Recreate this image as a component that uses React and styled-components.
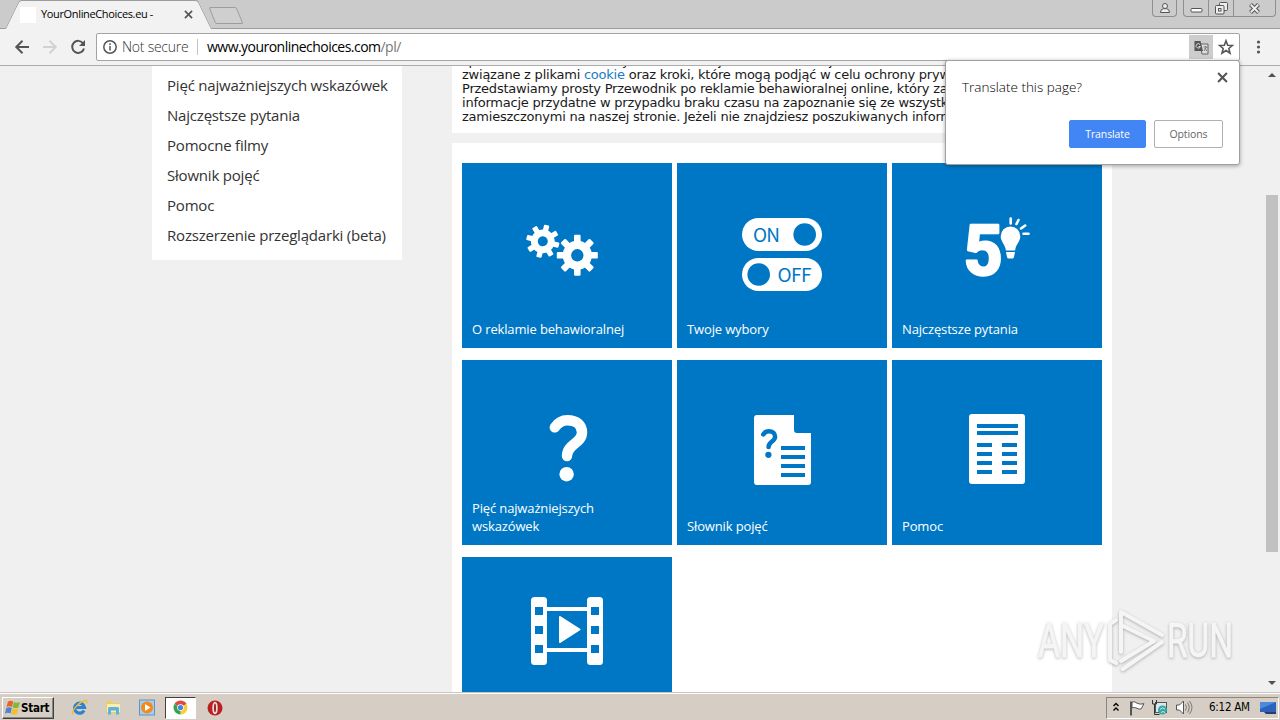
import React from "react";
import styled, { createGlobalStyle } from "styled-components";

const GlobalStyle = createGlobalStyle`
  * {
    box-sizing: border-box;
  }
  body {
    margin: 0;
    overflow: hidden;
  }
  svg {
    display: block;
    flex: none;
    overflow: visible;
  }
`;

const uiFont = `"Open Sans", "Noto Sans", sans-serif`;
const winFont = `"DejaVu Sans Condensed", "DejaVu Sans", sans-serif`;
const blue = "#0077c5";

const Screen = styled.div`
  position: relative;
  display: flex;
  flex-direction: column;
  width: 1280px;
  height: 720px;
  overflow: hidden;
  background: #f0f0f0;
  white-space: nowrap;
`;

/* ---------- browser frame ---------- */

const TabStrip = styled.div`
  display: flex;
  height: 29px;
  background: #cbcbcb;
  border-bottom: 1px solid #9c9c9c;
`;

const Tab = styled.div`
  position: relative;
  display: flex;
  align-items: center;
  width: 207px;
  height: 29px;
  margin-left: 5px;
  padding: 0 19px 0 15px;
  z-index: 1;

  &::before,
  &::after {
    content: "";
    position: absolute;
    top: 0;
    bottom: 0;
    width: 55%;
    background: #f2f2f2;
    border-top: 1px solid #9c9c9c;
    z-index: -1;
  }
  &::before {
    left: 0;
    border-left: 1px solid #9c9c9c;
    border-top-left-radius: 3px;
    transform: skewX(-26deg);
    transform-origin: bottom left;
  }
  &::after {
    right: 0;
    border-right: 1px solid #9c9c9c;
    border-top-right-radius: 3px;
    transform: skewX(26deg);
    transform-origin: bottom right;
  }
`;

const Favicon = styled.div`
  width: 16px;
  height: 16px;
  background: #fff;
`;

const TabTitle = styled.div`
  flex: 1;
  margin-left: 5px;
  margin-top: -1px;
  font: 400 11px/20px ${uiFont};
  letter-spacing: -0.35px;
  color: #000;
`;

const NewTab = styled.div`
  width: 28px;
  height: 17px;
  margin: 7px 0 0;
  border: 1px solid #9d9d9d;
  border-radius: 2px;
  background: #cfcfcf;
  transform: skewX(22deg);
`;

const WindowButtons = styled.div`
  display: flex;
  margin-left: auto;
  margin-right: 4px;
  height: 17px;
`;

const WindowButton = styled.div`
  display: flex;
  align-items: center;
  justify-content: center;
  width: ${props => props.$width}px;
  margin-left: ${props => props.$gap || 0}px;
  border: 1px solid #8f8f8f;
  border-top: none;
  border-right-width: ${props => (props.$joined ? 0 : 1)}px;
  border-radius: ${props => props.$radius || "0"};
`;

const Toolbar = styled.div`
  display: flex;
  align-items: center;
  height: 37px;
  padding-left: 14px;
  background: #f2f2f2;
  border-bottom: 1px solid #acacac;
`;

const NavIcons = styled.div`
  display: flex;
  gap: 12px;
  width: 82px;
`;

const AddressBar = styled.div`
  display: flex;
  align-items: center;
  width: 1144px;
  height: 28px;
  padding: 0 5px;
  background: #fff;
  border: 1px solid #a3a3a3;
  border-radius: 2px;
  font: 400 14px/24px ${uiFont};
`;

const NotSecure = styled.div`
  width: 76px;
  margin-left: 4px;
  border-right: 1px solid #c4c4c4;
  font-weight: 300;
  line-height: 16px;
  letter-spacing: -0.25px;
  color: #333;
`;

const Url = styled.div`
  flex: 1;
  margin-left: 9px;
  letter-spacing: -0.53px;
  color: #000;

  span {
    color: #777;
  }
`;

const TranslateChip = styled.div`
  display: flex;
  align-items: center;
  justify-content: center;
  width: 24px;
  height: 24px;
  margin-right: 5px;
  background: #cdcdcd;
`;

/* ---------- web page ---------- */

const Viewport = styled.div`
  display: flex;
  align-items: flex-start;
  height: 626px;
  overflow: hidden;
`;

const Sidebar = styled.div`
  width: 250px;
  height: 194px;
  margin-left: 152px;
  padding: 4px 15px;
  background: #fff;
`;

const SidebarLink = styled.div`
  font: 400 15px/30px ${uiFont};
  letter-spacing: -0.2px;
  color: #333;
`;

const Main = styled.div`
  display: flex;
  flex-direction: column;
  gap: 10px;
  width: 660px;
  height: 626px;
  margin-left: 50px;
`;

const Intro = styled.div`
  display: flex;
  flex-direction: column;
  justify-content: flex-end;
  flex: none;
  height: 67px;
  padding: 0 10px 9px;
  overflow: hidden;
  background: #fff;
  font: 400 13px/14px "DejaVu Sans", sans-serif;
  color: #1a1a1a;

  div {
    flex: none;
    letter-spacing: -0.23px;
  }
  span {
    color: #1a7cc4;
  }
`;

const Tiles = styled.div`
  display: grid;
  flex: 1;
  grid-template-columns: repeat(3, 210px);
  grid-auto-rows: 185px;
  gap: 12px 5px;
  padding: 20px 10px 0;
  background: #fff;
`;

const Tile = styled.div`
  display: flex;
  flex-direction: column;
  align-items: center;
  justify-content: space-between;
  padding: 35px 10px 10px;
  background: ${blue};
`;

const TileLabel = styled.div`
  width: 100%;
  height: 18px;
  display: flex;
  flex-direction: column;
  justify-content: flex-end;
  font: 400 13px/18px ${uiFont};
  letter-spacing: -0.14px;
  white-space: pre;
  color: #fff;
`;

const ScrollBar = styled.div`
  display: flex;
  flex-direction: column;
  align-items: center;
  width: 14px;
  height: 626px;
  margin-left: auto;
  margin-right: 1px;
`;

const Thumb = styled.div`
  width: 12px;
  height: 357px;
  margin: 118px 0 auto;
  background: #c1c1c1;
`;

const Arrow = styled.div`
  width: 0;
  border: 4px solid transparent;
  border-width: ${props => (props.$down ? "4px 4px 0" : "0 4px 4px")};
  border-${props => (props.$down ? "top" : "bottom")}-color: #505050;
  margin: ${props => (props.$down ? "0 0 7px" : "7px 0 0")};
`;

/* ---------- translate bubble ---------- */

const Bubble = styled.div`
  position: absolute;
  left: 945px;
  top: 60px;
  display: flex;
  flex-direction: column;
  justify-content: space-between;
  width: 295px;
  height: 105px;
  padding: 11px 16px 16px;
  background: #fff;
  border: 1px solid #a0a0a0;
  border-radius: 3px;
  box-shadow: 0 1px 4px rgba(0, 0, 0, 0.35);
  z-index: 5;
`;

const BubbleTop = styled.div`
  display: flex;
  justify-content: space-between;
  margin-right: -5px;
`;

const BubbleTitle = styled.div`
  margin-top: 5px;
  font: 300 13.5px/20px ${uiFont};
  color: #000;
`;

const BubbleButtons = styled.div`
  display: flex;
  justify-content: flex-end;
  gap: 8px;
`;

const BubbleButton = styled.div`
  width: ${props => props.$width}px;
  height: 28px;
  border: 1px solid ${props => (props.$primary ? "#4285f4" : "#b0b0b0")};
  border-radius: 2px;
  background: ${props => (props.$primary ? "#4285f4" : "#fff")};
  color: ${props => (props.$primary ? "#fff" : "#666")};
  font: 400 10.5px/26px ${uiFont};
  letter-spacing: -0.1px;
  text-align: center;
`;

/* ---------- watermark ---------- */

const Watermark = styled.div`
  position: absolute;
  left: 1030px;
  top: 600px;
  filter: drop-shadow(0 1px 1.5px rgba(0, 0, 0, 0.28));
`;

/* ---------- taskbar ---------- */

const Taskbar = styled.div`
  display: flex;
  align-items: center;
  height: 28px;
  padding: 2px 0 0 2px;
  background: #d6cec4;
  border-top: 1px solid #c9c5be;
  box-shadow: inset 0 1px 0 #fff;
  font: 400 11.5px/20px ${winFont};
`;

const StartButton = styled.div`
  display: flex;
  align-items: center;
  gap: 1px;
  width: 52px;
  height: 22px;
  padding-left: 2px;
  border: 1px solid;
  border-color: #fff #404040 #404040 #fff;
  box-shadow: inset -1px -1px 0 #8c8680;
  font-weight: bold;
  font-size: 11.5px;
  letter-spacing: -0.25px;
  color: #000;
`;

const QuickLaunch = styled.div`
  display: flex;
  align-items: center;
  margin-left: 9px;
`;

const TaskIcon = styled.div`
  display: flex;
  align-items: center;
  justify-content: center;
  width: ${props => props.$width || 33.5}px;
  height: 22px;
`;

const ActiveTaskIcon = styled(TaskIcon)`
  width: 31px;
  margin-left: 1px;
  background: #fff;
  border: 1px solid;
  border-color: #404040 #fff #fff #404040;
`;

const Tray = styled.div`
  display: flex;
  align-items: center;
  width: 173px;
  height: 22px;
  margin-left: auto;
  margin-right: 1px;
  padding-left: 5px;
  border: 1px solid;
  border-color: #8c8680 #fff #fff #8c8680;
`;

const Clock = styled.div`
  width: 51px;
  margin-left: 16px;
  margin-top: -1px;
  letter-spacing: -0.25px;
  color: #000;
`;

const Close = ({ size, stroke = 2 }) => (
  <svg width={size} height={size} viewBox="0 0 10 10">
    <path d="M1 1l8 8M9 1l-8 8" stroke="#555" strokeWidth={stroke} />
  </svg>
);

const Gear = ({ x, y, scale = 1, turn = 0 }) => (
  <g transform={`translate(${x} ${y}) scale(${scale}) rotate(${turn})`}>
    <circle r="10.4" fill="none" stroke="#fff" strokeWidth="8.4" />
    {[0, 45, 90, 135, 180, 225, 270, 315].map(a => (
      <rect
        key={a}
        x="-3.3"
        y="-20.5"
        width="6.6"
        height="9"
        rx="1.2"
        fill="#fff"
        transform={`rotate(${a})`}
      />
    ))}
  </g>
);

const Question = ({ color }) => (
  <g>
    <path
      d="M32.8 22.4C36 17.5 40 15.2 45.5 15.2C54.5 15.2 60 20 60 27.5C60 38.5 45 39 45 51"
      fill="none"
      stroke={color}
      strokeWidth="10.4"
      strokeLinecap="round"
    />
    <circle cx="44.6" cy="69.2" r="7.2" fill={color} />
  </g>
);

const GearsIcon = () => (
  <g>
    <Gear x={20.8} y={33.3} scale={0.81} turn={14} />
    <Gear x={55.3} y={47.3} />
  </g>
);

const SwitchesIcon = () => (
  <g fill={blue} fontFamily="Noto Sans CJK SC, sans-serif" fontSize="19">
    <rect x="5" y="10" width="80" height="33" rx="16.5" fill="#fff" />
    <rect x="5" y="50" width="80" height="33" rx="16.5" fill="#fff" />
    <circle cx="67.7" cy="26.5" r="11.3" />
    <circle cx="21.7" cy="66.5" r="11.3" />
    <text x="16" y="33.5" textLength="27">ON</text>
    <text x="40.5" y="73.5" textLength="34">OFF</text>
  </g>
);

const FiveIcon = () => (
  <g fill="#fff">
    <text
      x="11.5"
      y="67"
      fontFamily="Roboto, sans-serif"
      fontWeight="700"
      fontSize="70"
      textLength="39"
      lengthAdjust="spacingAndGlyphs"
      stroke="#fff"
      strokeWidth="2.6"
      strokeLinejoin="round"
    >
      5
    </text>
    <path d="M58.5 18.5a9.8 9.8 0 0 1 9.8 9.8c0 5.6-4.6 8-5.2 14.2h-9.2c-.6-6.2-5.2-8.6-5.2-14.2a9.8 9.8 0 0 1 9.8-9.8z" stroke={blue} strokeWidth="1" paintOrder="stroke" />
    <path d="M54 44h9l-1 5q-.3 1.5-1.8 1.5h-3.4q-1.5 0-1.8-1.5z" />
    <path
      d="M58.7 10.500v5M64.500 16l2-4M69 20.500l4.200-3M71.500 25.700h5"
      stroke="#fff"
      strokeWidth="2.6"
      strokeLinecap="round"
    />
  </g>
);

const GlossaryIcon = () => (
  <g>
    <path
      d="M20 10h37v15q0 3 3 3h14v49q0 3-3 3H20q-3 0-3-3V13q0-3 3-3z"
      fill="#fff"
    />
    <g transform="translate(12 19.7) scale(.435)">
      <Question color={blue} />
    </g>
    {[41, 50, 59, 68].map(y => (
      <rect key={y} x="44" y={y} width="24" height="4" fill={blue} />
    ))}
  </g>
);

const HelpIcon = () => (
  <g fill={blue}>
    <rect x="17" y="9" width="56" height="70" rx="3" fill="#fff" />
    <rect x="25" y="19" width="41" height="4" />
    <rect x="25" y="26" width="41" height="4" />
    {[38, 47, 56, 65].map(y => (
      <path key={y} d={`M25 ${y}h15v4h-15zM50 ${y}h15v4h-15z`} />
    ))}
  </g>
);

const FilmIcon = () => (
  <g fill="#fff">
    <rect x="9" y="-5" width="16" height="68" rx="3.5" />
    <rect x="65" y="-5" width="16" height="68" rx="3.5" />
    <rect x="25" y="5" width="40" height="4" />
    <rect x="25" y="46" width="40" height="4" />
    <path
      d="M38 15l19.5 12.5l-19.5 12.5z"
      stroke="#fff"
      strokeWidth="2"
      strokeLinejoin="round"
    />
    {[5, 24, 43].map(y => (
      <path key={y} d={`M13 ${y}h8v8h-8zM69 ${y}h8v8h-8z`} fill={blue} />
    ))}
  </g>
);

const tiles = [
  { label: "O reklamie behawioralnej", Drawing: GearsIcon },
  { label: "Twoje wybory", Drawing: SwitchesIcon },
  { label: "Najczęstsze pytania", Drawing: FiveIcon },
  { label: "Pięć najważniejszych\nwskazówek", Drawing: () => <Question color="#fff" /> },
  { label: "Słownik pojęć", Drawing: GlossaryIcon },
  { label: "Pomoc", Drawing: HelpIcon },
  { label: "", Drawing: FilmIcon }
];

const links = [
  "Pięć najważniejszych wskazówek",
  "Najczęstsze pytania",
  "Pomocne filmy",
  "Słownik pojęć",
  "Pomoc",
  "Rozszerzenie przeglądarki (beta)"
];

const BrowserTop = () => (
  <>
    <TabStrip>
      <Tab>
        <Favicon />
        <TabTitle>YourOnlineChoices.eu -</TabTitle>
        <Close size={9} stroke={1.8} />
      </Tab>
      <NewTab />
      <WindowButtons>
        <WindowButton $width={25} $radius="0 0 4px 4px">
          <svg width="12" height="12" viewBox="0 0 12 12" fill="#eee" stroke="#555">
            <path d="M1.5 10.5q0-3.5 3-3.8h3q3 .3 3 3.8z" />
            <circle cx="6" cy="4" r="2.5" />
          </svg>
        </WindowButton>
        <WindowButton $width={25} $gap={6} $joined $radius="0 0 0 4px">
          <svg width="13" height="12" viewBox="0 0 13 12" fill="#fff" stroke="#555">
            <rect x="1" y="6.5" width="11" height="3.5" rx="1" />
          </svg>
        </WindowButton>
        <WindowButton $width={25} $joined>
          <svg width="13" height="13" viewBox="0 0 13 13" fill="#eee" stroke="#555">
            <rect x="4.5" y=".5" width="8" height="8" rx="1" />
            <rect x=".5" y="3.5" width="8.5" height="8.5" rx="1" />
            <rect x="3.5" y="6.5" width="2.5" height="2.5" />
          </svg>
        </WindowButton>
        <WindowButton $width={43} $radius="0 0 4px 0">
          <svg width="13" height="11" viewBox="0 0 13 11">
            <path d="M2.5 1.5l8 8M10.5 1.5l-8 8" stroke="#555" strokeWidth="4" />
            <path d="M2.8 1.8l7.4 7.4M10.2 1.8l-7.4 7.4" stroke="#eee" strokeWidth="2" />
          </svg>
        </WindowButton>
      </WindowButtons>
    </TabStrip>
    <Toolbar>
      <NavIcons>
        <svg width="16" height="16" viewBox="0 0 16 16" fill="none" stroke="#555" strokeWidth="2">
          <path d="M15 8H2.5M8.5 1.8L2.3 8l6.2 6.2" />
        </svg>
        <svg width="16" height="16" viewBox="0 0 16 16" fill="none" stroke="#d2d2d2" strokeWidth="2">
          <path d="M1 8h12.5M7.5 1.8L13.7 8l-6.2 6.2" />
        </svg>
        <svg width="16" height="16" viewBox="0 0 16 16" fill="none" stroke="#555" strokeWidth="2">
          <path d="M13.2 4.5A6 6 0 1 0 14 9.5" />
          <path d="M15 1v6H9z" fill="#555" stroke="none" />
        </svg>
      </NavIcons>
      <AddressBar>
        <svg width="16" height="16" viewBox="0 0 16 16" fill="none" stroke="#555" strokeWidth="1.5">
          <circle cx="8" cy="8" r="6.2" />
          <path d="M8 7v4.5M8 4.2v1.7" />
        </svg>
        <NotSecure>Not secure</NotSecure>
        <Url>
          www.youronlinechoices.com<span>/pl/</span>
        </Url>
        <TranslateChip>
          <svg width="15" height="15" viewBox="0 0 15 15">
            <path d="M6 4h8v10H8z" fill="#ddd" stroke="#666" />
            <path d="M9.5 7h4M11.5 6v1M10 11l2.7-4M10.5 8l2.5 3" stroke="#777" fill="none" />
            <path d="M.5 1h6l2.5 10H.5z" fill="#555" />
            <path d="M6 4.5a2.2 2.2 0 1 0 .4 2H4.6" stroke="#ddd" fill="none" />
          </svg>
        </TranslateChip>
        <svg width="16" height="16" viewBox="0 0 16 16" fill="none" stroke="#555" strokeWidth="1.6">
          <path d="M8 1.8l1.7 4.4 4.7.3-3.6 3 1.2 4.6L8 11.5l-4 2.6 1.2-4.6-3.6-3 4.7-.3z" />
        </svg>
      </AddressBar>
      <svg width="37" height="16" viewBox="0 0 37 16" fill="#555">
        <circle cx="18.5" cy="3" r="1.6" />
        <circle cx="18.5" cy="8" r="1.6" />
        <circle cx="18.5" cy="13" r="1.6" />
      </svg>
    </Toolbar>
  </>
);

const TranslateBubble = () => (
  <Bubble>
    <BubbleTop>
      <BubbleTitle>Translate this page?</BubbleTitle>
      <Close size={11} stroke={1.9} />
    </BubbleTop>
    <BubbleButtons>
      <BubbleButton $primary $width={77}>Translate</BubbleButton>
      <BubbleButton $width={69}>Options</BubbleButton>
    </BubbleButtons>
  </Bubble>
);

const AnyRun = () => (
  <Watermark>
    <svg width="215" height="80" viewBox="0 0 215 80">
      <g
        fill="#f5f5f5"
        stroke="#f5f5f5"
        strokeWidth="0.8"
        fontFamily="Roboto, sans-serif"
        fontSize="48"
      >
        <text x="8" y="57" textLength="66" lengthAdjust="spacingAndGlyphs">ANY</text>
        <text x="137" y="57" textLength="66" lengthAdjust="spacingAndGlyphs">RUN</text>
      </g>
      <g fill="none" stroke="#f5f5f5" strokeWidth="4" strokeLinejoin="round" strokeLinecap="round">
        <path d="M91 52V12l41 23" />
        <path d="M132 42L93 69" />
        <path d="M91 25l33 16-33 20" />
        <path d="M86 20l-6 4v36l6 3" />
      </g>
    </svg>
  </Watermark>
);

const WindowsTaskbar = () => (
  <Taskbar>
    <StartButton>
      <svg width="15" height="16" viewBox="0 0 15 16">
        <path d="M3 1.5q2.5-1.500 5.200 0L7 7q-2.800-1.400-5.500 0z" fill="#e8622c" />
        <path d="M8.900 2q2.800 1.300 6 0L13.500 7.500q-2.900 1.200-5.800 0z" fill="#7fb93c" />
        <path d="M1.300 8q2.700-1.400 5.500 0L5.500 13.500q-2.700-1.400-5.500 0z" fill="#4a86cf" />
        <path d="M7.500 8.500q2.900 1.300 5.800 0L12 14q-2.900 1.300-5.800 0z" fill="#f5bd2a" />
      </svg>
      Start
    </StartButton>
    <QuickLaunch>
      <TaskIcon>
        <svg width="17" height="17" viewBox="0 0 17 17" fill="none">
          <path d="M13 11.500A5 5 0 1 1 13.500 8.500H4.500" stroke="#2c83cf" strokeWidth="3.200" />
          <path d="M2 15.500C-1 13 8 3 14 1.500q3-.2 1.500 3" stroke="#f0bc35" strokeWidth="1.400" />
        </svg>
      </TaskIcon>
      <TaskIcon>
        <svg width="17" height="17" viewBox="0 0 17 17">
          <path d="M1 2h6l1 2h7v10H1z" fill="#e8cf6a" />
          <path d="M2 5h13v8H2z" fill="#f8eeb0" />
          <path d="M3 15.500V9.500q0-1.500 1.500-1.500h8q1.500 0 1.500 1.500v6h-3V11.500H6v4z" fill="#5fb2dc" />
        </svg>
      </TaskIcon>
      <TaskIcon>
        <svg width="16" height="17" viewBox="0 0 16 17">
          <rect x=".5" y="1" width="15" height="15" fill="#a9cdee" stroke="#5b94cc" />
          <circle cx="8" cy="8.5" r="6" fill="#f28a1c" />
          <path d="M6 5l5.500 3.500L6 12z" fill="#fff" />
        </svg>
      </TaskIcon>
      <ActiveTaskIcon>
        <svg width="15" height="15" viewBox="0 0 15 15">
          <path d="M7.500 7.500L1.440 4A7 7 0 0 1 13.560 4z" fill="#dd4b3e" />
          <path d="M7.500 7.500L13.560 4A7 7 0 0 1 7.500 14.500z" fill="#f8ce3c" />
          <path d="M7.500 7.500V14.500A7 7 0 0 1 1.440 4z" fill="#32a350" />
          <circle cx="7.5" cy="7.5" r="3.3" fill="#fff" />
          <circle cx="7.5" cy="7.5" r="2.6" fill="#4384e8" />
        </svg>
      </ActiveTaskIcon>
      <TaskIcon $width={38}>
        <svg width="16" height="16" viewBox="0 0 16 16">
          <circle cx="8" cy="8" r="7.5" fill="#bb1f1f" />
          <ellipse cx="8" cy="8" rx="1.8" ry="5.3" fill="#8a0f0f" stroke="#f2dede" strokeWidth="1.8" />
        </svg>
      </TaskIcon>
    </QuickLaunch>
    <Tray>
      <svg width="8" height="12" viewBox="0 0 8 12" fill="none" stroke="#000" strokeWidth="1.4">
        <path d="M1.5 4L4 1.500 6.500 4M1.500 8.500L4 6l2.500 2.500" />
      </svg>
      <svg width="31" height="18" viewBox="0 0 31 18" fill="#fff" stroke="#555">
        <path d="M11 2.500v14" stroke="#555" strokeWidth="2" />
        <path d="M12 3q3-1 5 1.200 3 1.600 7 .5l-3 5.300q-2 .5-4-.7-2-1.300-5-.5z" />
      </svg>
      <svg width="17" height="17" viewBox="0 0 17 17">
        <rect x="4.5" y="3.5" width="11" height="10" fill="#d5e8ee" stroke="#555" />
        <circle cx="11.5" cy="11" r="4.5" fill="#3ba4a4" />
        <path d="M9 10.500q2.500-3 5-.5M10 13.500q2-2 4 0" stroke="#c6efe0" fill="none" />
        <path d="M1.500 1v4h4V1M3.500 5v10.500h5" stroke="#333" fill="none" />
      </svg>
      <svg width="25" height="17" viewBox="0 0 25 17" fill="none" stroke="#777">
        <path d="M8.500 6h3l4-4v13l-4-4h-3z" fill="#fff" stroke="#555" />
        <path d="M17.500 5.500q2 3 0 6M19.500 3.500q3.500 5 0 10M21.500 2q5 6.500 0 13" />
      </svg>
      <Clock>6:12 AM</Clock>
      <svg width="16" height="14" viewBox="0 0 16 14">
        <path d="M0 1h16v10H0z" fill="#2a62bd" />
        <path d="M0 1h16L0 8z" fill="#4c8add" />
        <path d="M4 11h12v2H6z" fill="#263f66" />
      </svg>
    </Tray>
  </Taskbar>
);

const App = () => (
  <Screen>
    <GlobalStyle />
    <BrowserTop />
    <Viewport>
      <Sidebar>
        {links.map(link => (
          <SidebarLink key={link}>{link}</SidebarLink>
        ))}
      </Sidebar>
      <Main>
        <Intro>
          <div>sposobu działania reklamy behawioralnej, dalsze informacje</div>
          <div>
            związane z plikami <span>cookie</span> oraz kroki, które mogą podjąć w celu ochrony prywatności.
          </div>
          <div>Przedstawiamy prosty Przewodnik po reklamie behawioralnej online, który zawiera</div>
          <div>informacje przydatne w przypadku braku czasu na zapoznanie się ze wszystkimi</div>
          <div>zamieszczonymi na naszej stronie. Jeżeli nie znajdziesz poszukiwanych informacji</div>
        </Intro>
        <Tiles>
          {tiles.map(({ label, Drawing }) => (
            <Tile key={label}>
              <svg width="90" height="100" viewBox="0 -10 90 100">
                <Drawing />
              </svg>
              <TileLabel>{label}</TileLabel>
            </Tile>
          ))}
        </Tiles>
      </Main>
      <ScrollBar>
        <Arrow />
        <Thumb />
        <Arrow $down />
      </ScrollBar>
    </Viewport>
    <WindowsTaskbar />
    <TranslateBubble />
    <AnyRun />
  </Screen>
);

export default App;
